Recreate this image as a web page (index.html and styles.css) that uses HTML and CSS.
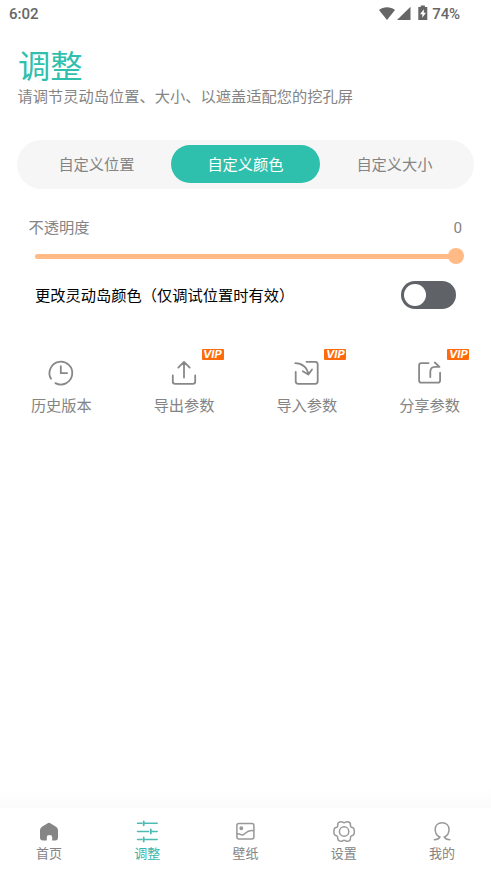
FILE: index.html
```html
<!DOCTYPE html>
<html lang="zh-CN">
<head>
<meta charset="utf-8">
<meta name="viewport" content="width=device-width, initial-scale=1">
<title>调整</title>
<link rel="stylesheet" href="styles.css">
</head>
<body>
<div class="screen">
  <header class="status">
    <span>6:02</span>
    <div class="status-right">
      <svg class="signals" width="50" height="18" viewBox="0 0 50 18">
        <path d="M1 4C5.500.2 12.500.2 17 4L9 14Z"/>
        <path d="M32.500.8V14H19Z"/>
        <path fill-rule="evenodd" d="M42.700-.4h4.200v1.500h2.400v13h-9V1.100h2.400zM45.800 3.200l-3.800 5h2.300v3.600l3.700-5h-2.200z"/>
      </svg>
      <span class="battery">74%</span>
    </div>
  </header>

  <main class="content">
    <h1 class="title">调整</h1>
    <p class="subtitle">请调节灵动岛位置、大小、以遮盖适配您的挖孔屏</p>

    <nav class="tabs">
      <span class="tab">自定义位置</span>
      <span class="tab tab-active">自定义颜色</span>
      <span class="tab">自定义大小</span>
    </nav>

    <div class="opacity-row"><span>不透明度</span><span class="value">0</span></div>
    <div class="slider"><div class="track"></div><div class="thumb"></div></div>
    <div class="switch-row">
      <span class="switch-label">更改灵动岛颜色（仅调试位置时有效）</span>
      <div class="switch"><div class="knob"></div></div>
    </div>

    <section class="actions">
      <div class="action">
        <svg width="28" height="28" viewBox="0 0 28 28"><path d="M4 19.800A11.400 11.400 0 1 1 8.400 24.100M13.800 7.200v7h6.300"/></svg>
        <span>历史版本</span>
      </div>
      <div class="action">
        <svg width="28" height="28" viewBox="0 0 28 28"><path d="M14 18.500V3.300M8.300 8.600L14 2.900l5.700 5.700M2.800 16.300v6.200q0 2.300 2.300 2.300h17.800q2.300 0 2.300-2.300v-6.200"/></svg>
        <span>导出参数</span>
        <b class="vip"><i>VIP</i></b>
      </div>
      <div class="action">
        <svg width="28" height="28" viewBox="0 0 28 28"><path d="M13.500 2.800h8.700q2.500 0 2.500 2.500v17q0 2.500-2.500 2.500H5.200q-2.500 0-2.500-2.500V13M2.300 4.200C9 4.200 14.500 8.500 15.300 15.500M9.800 12.300l5.500 3.300 3.700-5.100"/></svg>
        <span>导入参数</span>
        <b class="vip"><i>VIP</i></b>
      </div>
      <div class="action">
        <svg width="28" height="28" viewBox="0 0 28 28"><path d="M12.500 4.200H5.300Q3.100 4.200 3.100 6.400v15.100q0 2.200 2.200 2.200h16.600q2.200 0 2.200-2.200v-7.800M14.300 18v-5Q14.300 7.800 19 7.800h4.500M18.800 3.500l4.700 4.300"/></svg>
        <span>分享参数</span>
        <b class="vip"><i>VIP</i></b>
      </div>
    </section>
  </main>

  <div class="fade"></div>
  <footer class="nav">
    <div class="nav-item">
      <svg width="24" height="24" viewBox="0 0 24 24"><path class="home" d="M10.300 3.400q1.700-1.100 3.400 0l5.300 3.300q2 1.300 2 3.600v7.200q0 3-2.800 3h-3v-3.600q0-2-2.700-2t-2.700 2v3.600H6q-3 0-3-3v-7.200q0-2.300 2-3.600z"/></svg>
      <span>首页</span>
    </div>
    <div class="nav-item nav-active">
      <svg width="24" height="24" viewBox="0 0 24 24"><path d="M2.500 3.300H7M9.200 3.300H22.200M2.500 11.500H13.500M16.200 11.500H22.200M2.500 19.500H7M9.200 19.500H22.200"/><path class="ticks" d="M8.700 1.300v4M15.800 9.500v4M8.700 17.500v4"/></svg>
      <span>调整</span>
    </div>
    <div class="nav-item">
      <svg width="24" height="24" viewBox="0 0 24 24"><rect x="3.900" y="3.600" width="17" height="15.400" rx="2"/><circle cx="8.300" cy="8.300" r="1.200" fill="#999"/><path d="M4 14c3-1.500 4 2.600 7 .3 2-1.600 4.500-4.800 9.300-3.500"/></svg>
      <span>壁纸</span>
    </div>
    <div class="nav-item">
      <svg width="24" height="24" viewBox="0 0 24 24"><path d="M9.200 1.700c1.200 0 1.600 1 2.900 1s1.700-1 2.900-1c1.800 0 3.400 1 3.400 2.300 0 1.100-.2 2 .6 2.900s2.100.4 2.700 1.400c.8 1.400.8 5 0 6.400-.6 1-1.900.6-2.700 1.500s-.6 1.800-.6 2.800c0 1.300-1.600 2.300-3.400 2.300-1.200 0-1.600-1-2.900-1s-1.700 1-2.900 1c-1.800 0-3.400-1-3.400-2.300 0-1 .2-1.900-.6-2.800s-2.100-.5-2.700-1.500c-.8-1.400-.8-5 0-6.400.6-1 1.900-.5 2.700-1.400s.6-1.800.6-2.900C5.800 2.700 7.400 1.700 9.200 1.700z"/><circle cx="12.100" cy="11.500" r="4.700"/></svg>
      <span>设置</span>
    </div>
    <div class="nav-item">
      <svg width="24" height="24" viewBox="0 0 24 24"><path d="M4.300 19.700q4.200-.2 5.700-2.700C7 15.900 5.200 13.500 5.200 9.800 5.200 5.500 8 2.700 12.100 2.700S19 5.500 19 9.800c0 3.700-1.800 6.100-4.800 7.200q1.500 2.500 5.700 2.700"/></svg>
      <span>我的</span>
    </div>
  </footer>
</div>
</body>
</html>
```
FILE: styles.css
```css
* { box-sizing: border-box; }
body {
  margin: 0;
  background: #fff;
  color: #848484;
  font-family: Roboto, "Noto Sans CJK SC", sans-serif;
  font-size: 15.25px;
  font-weight: 400;
}
.screen { height: 873px; display: flex; flex-direction: column; overflow: hidden; }
.status {
  height: 28px;
  padding: 0 31px 0 9px;
  display: flex;
  justify-content: space-between;
  align-items: center;
  color: #666;
  font-size: 15px;
  font-weight: 500;
}
.status-right { display: flex; align-items: center; gap: 4px; }
.signals { fill: #666; margin-top: 1px; overflow: visible; }
.battery { letter-spacing: -0.1px; }
.content { flex: 1; padding: 18px 17px 0; }
.title {
  margin: 0 0 0 1px;
  height: 40px;
  line-height: 42px;
  font-size: 32.3px;
  font-weight: 400;
  color: #2fbfad;
}
.subtitle { margin: 0 0 0 0.6px; height: 22px; line-height: 22px; white-space: nowrap; }
.tabs {
  display: flex;
  height: 49px;
  margin-top: 32px;
  padding: 5px;
  border-radius: 24.5px;
  background: #f6f6f6;
}
.tab { flex: 1; height: 38px; line-height: 40px; text-align: center; border-radius: 19px; }
.tab-active { background: #2fbfad; color: #fff; }
.opacity-row {
  display: flex;
  justify-content: space-between;
  margin-top: 28px;
  padding: 0 12px 0 11.5px;
  height: 22px;
  line-height: 22px;
}
.slider { display: flex; align-items: center; height: 16px; margin: 9px 10px 0 18px; }
.track { flex: 1; height: 5px; border-radius: 3px 0 0 3px; background: #ffba85; }
.thumb { width: 16px; height: 16px; margin-left: -1px; border-radius: 50%; background: #ffba85; }
.switch-row {
  display: flex;
  justify-content: space-between;
  align-items: center;
  height: 28px;
  margin: 17px 18px 0;
  color: #000;
}
.switch-label { padding-bottom: 2px; }
.switch { width: 55px; height: 28px; padding: 3px; border-radius: 14px; background: #5f6368; }
.knob { width: 22px; height: 22px; border-radius: 50%; background: #fff; }
.actions {
  display: grid;
  grid-template-columns: repeat(4, 1fr);
  margin: 50px -17px 0;
}
.action {
  position: relative;
  display: flex;
  flex-direction: column;
  align-items: center;
  line-height: 22px;
}
.action svg { fill: none; stroke: #888; stroke-width: 1.8; stroke-linecap: round; stroke-linejoin: round; }
.action span { margin-top: 8px; }
.vip {
  position: absolute;
  top: -10px;
  left: calc(50% + 17.5px);
  width: 22px;
  height: 11px;
  border-radius: 1px;
  background: #ff6a0a;
  color: #fff;
  font: 700 10px/11px Inter, sans-serif;
  text-align: center;
}
.vip i { display: inline-block; transform: scaleX(1.12); }
.fade { height: 20px; background: linear-gradient(#fff, #fbfbfb); }
.nav { display: grid; grid-template-columns: repeat(5, 1fr); height: 65px; padding-top: 12px; font-size: 13px; }
.nav-item { display: flex; flex-direction: column; align-items: center; line-height: 20px; }
.nav-item svg { fill: none; stroke: #999; stroke-width: 1.5; stroke-linecap: round; stroke-linejoin: round; }
.nav-item .home { fill: #858585; stroke: none; }
.nav-active { color: #36b7ad; }
.nav-active svg { stroke: #4dbbb3; }
.nav-active .ticks { stroke-width: 1.8; }
```
